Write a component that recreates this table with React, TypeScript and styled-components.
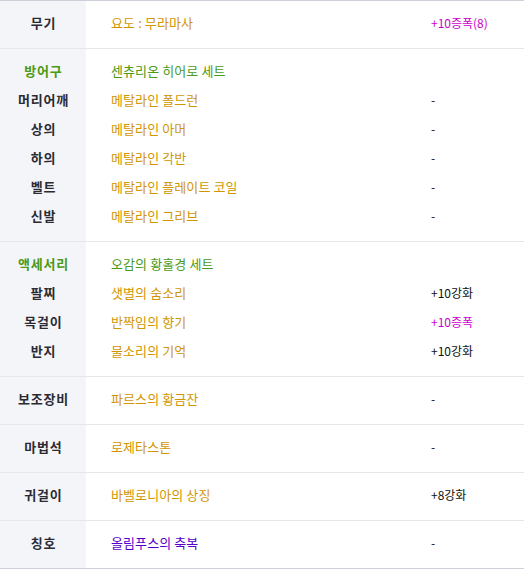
import React from 'react';
import styled, { createGlobalStyle } from 'styled-components';

const GlobalStyle = createGlobalStyle`
  html, body {
    margin: 0;
    padding: 0;
    background: #fff;
  }
  body {
    font-family: "Noto Sans CJK KR", "Noto Sans", sans-serif;
  }
`;

const COLORS: Record<string, string> = {
  gold: '#d29500',
  green: '#4b9a18',
  magenta: '#cc00cc',
  purple: '#5500cc',
  black: '#111',
};

const Table = styled.div`
  width: 524px;
  border-top: 1px solid #cdd0d8;
  border-bottom: 1px solid #cdd0d8;
`;

const Section = styled.div`
  padding: 7px 0 11px;
  background: linear-gradient(to right, #f4f5f9 86px, #fff 86px);
  border-bottom: 1px solid #e6e6ea;

  &:last-child {
    border-bottom: none;
  }
`;

const Row = styled.div`
  display: grid;
  grid-template-columns: 86px 345px 1fr;
  height: 29px;
  align-items: center;
`;

const Label = styled.div<{ $green?: boolean }>`
  text-align: center;
  font-size: 13px;
  font-weight: 700;
  letter-spacing: 0.8px;
  text-indent: 0.8px;
  color: ${(p) => (p.$green ? COLORS.green : '#2b2b33')};
`;

const Item = styled.div<{ $color: string }>`
  padding-left: 25px;
  font-size: 13px;
  letter-spacing: 0.1px;
  color: ${(p) => COLORS[p.$color]};
`;

const Value = styled.div<{ $color?: string }>`
  font-size: 12px;
  color: ${(p) => COLORS[p.$color || 'black']};
`;

type Entry = { label: string; item: string; color: string; value?: string; valueColor?: string; head?: boolean };

const sections: Entry[][] = [
  [{ label: '무기', item: '요도 : 무라마사', color: 'gold', value: '+10증폭(8)', valueColor: 'magenta' }],
  [
    { label: '방어구', item: '센츄리온 히어로 세트', color: 'green', head: true },
    { label: '머리어깨', item: '메탈라인 폴드런', color: 'gold', value: '-' },
    { label: '상의', item: '메탈라인 아머', color: 'gold', value: '-' },
    { label: '하의', item: '메탈라인 각반', color: 'gold', value: '-' },
    { label: '벨트', item: '메탈라인 플레이트 코일', color: 'gold', value: '-' },
    { label: '신발', item: '메탈라인 그리브', color: 'gold', value: '-' },
  ],
  [
    { label: '액세서리', item: '오감의 황홀경 세트', color: 'green', head: true },
    { label: '팔찌', item: '샛별의 숨소리', color: 'gold', value: '+10강화' },
    { label: '목걸이', item: '반짝임의 향기', color: 'gold', value: '+10증폭', valueColor: 'magenta' },
    { label: '반지', item: '물소리의 기억', color: 'gold', value: '+10강화' },
  ],
  [{ label: '보조장비', item: '파르스의 황금잔', color: 'gold', value: '-' }],
  [{ label: '마법석', item: '로제타스톤', color: 'gold', value: '-' }],
  [{ label: '귀걸이', item: '바벨로니아의 상징', color: 'gold', value: '+8강화' }],
  [{ label: '칭호', item: '올림푸스의 축복', color: 'purple', value: '-' }],
];

export default function App() {
  return (
    <>
      <GlobalStyle />
      <Table>
        {sections.map((rows, i) => (
          <Section key={i}>
            {rows.map((r) => (
              <Row key={r.label}>
                <Label $green={r.head}>{r.label}</Label>
                <Item $color={r.color}>{r.item}</Item>
                <Value $color={r.valueColor}>{r.value}</Value>
              </Row>
            ))}
          </Section>
        ))}
      </Table>
    </>
  );
}
